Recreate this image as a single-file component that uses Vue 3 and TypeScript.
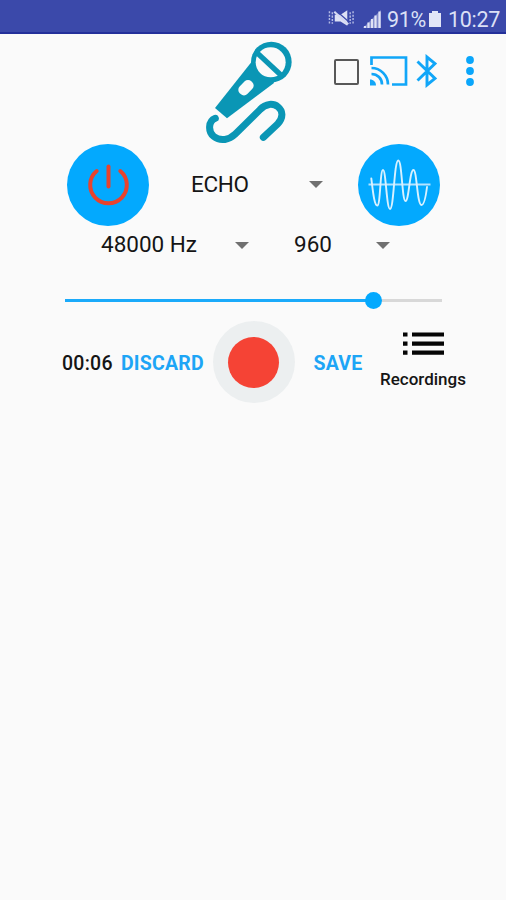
<script setup lang="ts">
import { ref } from 'vue'

const mode = ref('ECHO')
const sampleRate = ref('48000 Hz')
const bufferSize = ref('960')
const elapsed = ref('00:06')
const volume = ref(82)
</script>

<template>
  <main class="screen">
    <div class="status">
      <svg class="mute" viewBox="0 0 28 18">
        <path d="M7 5.500h6L20 1v16l-7-4.500H7z" fill="#dde1f5" />
        <path d="M9 2l15 13" stroke="#3b49aa" stroke-width="1.300" />
        <path d="M6.500 2.500L21 15.500" stroke="#d5d9f2" stroke-width="2.200" />
        <path d="M4.500 3v12M1.500 2v14M23 3v12M26 2v14" fill="none" stroke="#b4bbe5" stroke-width="1.500" stroke-dasharray="2.200 1.300" />
      </svg>
      <svg class="signal" viewBox="0 0 18 18">
        <path d="M0 18L18 0v18z" fill="#7e88cb" />
        <path d="M2 18v-2M5.500 18v-5.500M9 18V9M12.500 18V5.500M16.500 18V1.500" stroke="#e0e3f6" stroke-width="2.200" />
      </svg>
      <span class="percent">91%</span>
      <svg class="battery" viewBox="0 0 12 16"><path d="M3 0h6v2h3v14H0V2h3z" fill="#e2e5f7" /></svg>
      <span class="clock">10:27</span>
    </div>

    <header class="header">
      <svg class="mic" viewBox="0 0 330 345">
        <path d="M170 80L60 219L96 250L238 143z" fill="#0a96b5" />
        <circle cx="229" cy="81" r="61" fill="#0a96b5" />
        <circle cx="227" cy="82" r="45" fill="#fafafa" />
        <path d="M188 55L264 126" stroke="#0a96b5" stroke-width="16" />
        <rect x="-25" y="-16" width="50" height="32" rx="14" transform="translate(153 158) rotate(-46)" fill="#fafafa" />
        <path d="M61 250C39 259 39 290 56 304C77 321 103 314 121 297L195 224C230 184 287 227 247 268L205 307" fill="none" stroke="#0a96b5" stroke-width="21" stroke-linecap="round" />
      </svg>
      <div class="actions">
        <span class="checkbox"></span>
        <svg class="cast" viewBox="0 0 38 30">
          <path d="M1.500 9V1.500h34.500v27H22M1.500 12c9 0 16.500 7.500 16.500 16.500M1.500 18c6 0 10.500 4.500 10.500 10.500" fill="none" stroke="#11a6f8" stroke-width="2.700" />
          <path d="M0 23.500c3.500 0 6 2.500 6 6H0z" fill="#11a6f8" />
        </svg>
        <svg class="bluetooth" viewBox="0 0 22 34">
          <path d="M1.500 7.500L19 24.500L11 31V3l8 6.500L1.500 26.500" fill="none" stroke="#11a6f8" stroke-width="2.900" />
        </svg>
        <svg class="more" viewBox="0 0 8 30">
          <g fill="#0aa6fb"><circle cx="4" cy="4" r="3.900" /><circle cx="4" cy="15" r="3.900" /><circle cx="4" cy="26" r="3.900" /></g>
        </svg>
      </div>
    </header>

    <section class="modes">
      <button class="round">
        <svg viewBox="0 0 82 82">
          <path d="M29.700 27A18.300 18.300 0 1 0 53.300 27" fill="none" stroke="#e8432d" stroke-width="4" stroke-linecap="round" />
          <path d="M41.500 22.500v20" stroke="#e8432d" stroke-width="4" stroke-linecap="round" />
        </svg>
      </button>
      <div class="select mode"><span>{{ mode }}</span><i class="arrow"></i></div>
      <button class="round">
        <svg viewBox="0 0 82 82">
          <path d="M10.500 40.500H72.500" stroke="#b4e3ff" stroke-width="1.800" />
          <path d="M13.300 34.500C14.500 43 16 61.500 19.300 61.500C22.500 61.500 22 26 25 26C28 26 28.500 65 32 65C36 65 36 16.500 40.300 16.500C44 16.500 44 57 47.500 57C51 57 51.500 26 55.500 26C59 26 59 61 63.500 61C66 61 67.500 55 69 43" fill="none" stroke="#d8f1ff" stroke-width="1.900" stroke-linecap="round" />
        </svg>
      </button>
    </section>

    <section class="formats">
      <div class="select rate"><span>{{ sampleRate }}</span><i class="arrow"></i></div>
      <div class="select buffer"><span>{{ bufferSize }}</span><i class="arrow"></i></div>
    </section>

    <div class="slider">
      <div class="filled" :style="{ width: volume + '%' }"><i class="thumb"></i></div>
    </div>

    <section class="recorder">
      <span class="time">{{ elapsed }}</span>
      <a class="discard">DISCARD</a>
      <button class="record"><i></i></button>
      <a class="save">SAVE</a>
      <div class="recordings">
        <svg viewBox="0 0 41 24">
          <path d="M0 2.500h4.500M9 2.500h32M0 11.700h4.500M9 11.700h32M0 20.700h4.500M9 20.700h32" stroke="#050505" stroke-width="4.200" />
        </svg>
        <span>Recordings</span>
      </div>
    </section>
  </main>
</template>

<style>
body {
  margin: 0;
  background: #fafafa;
}
</style>

<style scoped>
.screen {
  width: 506px;
  height: 900px;
  overflow: hidden;
  background: #fafafa;
  color: #151515;
  font-family: Roboto, "Liberation Sans", sans-serif;
}
svg {
  display: block;
  flex: none;
}
span, a {
  white-space: nowrap;
}
button {
  border: 0;
  padding: 0;
  flex: none;
  border-radius: 50%;
}
.status {
  box-sizing: border-box;
  height: 34px;
  display: flex;
  align-items: center;
  padding: 6px 0 0 328px;
  background: #3b49aa;
  border-bottom: 2px solid #24309a;
  color: #dce0f6;
  font-size: 21.500px;
}
.mute { width: 27px; height: 18px; margin-top: -2px; }
.signal { width: 18px; height: 18px; margin-left: 8px; margin-top: -1px; }
.percent { width: 40px; margin-left: 6px; letter-spacing: -0.300px; }
.battery { width: 12px; height: 16px; margin-left: 2px; margin-top: -1px; }
.clock { margin-left: 7px; letter-spacing: -0.300px; }
.header {
  height: 110px;
  display: flex;
  align-items: flex-start;
  padding-left: 195px;
}
.mic { width: 110px; height: 115px; margin-top: 1px; }
.actions {
  display: flex;
  align-items: center;
  height: 74px;
  margin-left: 29px;
}
.checkbox {
  box-sizing: border-box;
  width: 25px;
  height: 26px;
  margin-top: 2px;
  border: 2px solid #585858;
  border-radius: 2px;
}
.cast { width: 38px; height: 30px; margin-left: 11px; }
.bluetooth { width: 22px; height: 34px; margin-left: 8px; }
.more { width: 8px; height: 30px; margin-left: 28px; }
.modes {
  display: flex;
  align-items: center;
  height: 81px;
  padding-left: 67px;
}
.round {
  width: 82px;
  height: 82px;
  background: #03a9fe;
}
.select {
  box-sizing: border-box;
  display: flex;
  align-items: center;
  justify-content: space-between;
  font-size: 22.500px;
}
.select span { padding-bottom: 2px; }
.arrow {
  border: 7px solid transparent;
  border-top-color: #707070;
  border-bottom: 0;
}
.mode { width: 132px; margin: 0 35px 0 42px; }
.mode span { letter-spacing: -0.300px; }
.formats {
  display: flex;
  height: 40px;
  padding-left: 101px;
}
.rate { width: 148px; }
.buffer { width: 96px; margin-left: 45px; }
.slider {
  width: 377px;
  height: 3px;
  margin: 34px 0 0 65px;
  background: #d8d8d8;
}
.filled {
  display: flex;
  align-items: center;
  justify-content: flex-end;
  height: 3px;
  background: #1aaafa;
}
.thumb {
  flex: none;
  width: 17px;
  height: 17px;
  margin-right: -8px;
  border-radius: 50%;
  background: #03a9fe;
}
.recorder {
  display: flex;
  align-items: center;
  height: 82px;
  margin-top: 19px;
  padding-left: 62px;
  font-size: 19.500px;
}
.time, .discard, .save { padding-top: 2px; }
.time { width: 59px; font-weight: 500; letter-spacing: 0.250px; }
.discard, .save { color: #1da5f6; font-weight: 700; letter-spacing: 0.200px; }
.discard { width: 91.500px; }
.record {
  display: flex;
  align-items: center;
  justify-content: center;
  width: 82px;
  height: 82px;
  background: #eceff0;
}
.record i {
  width: 51px;
  height: 51px;
  border-radius: 50%;
  background: #f54335;
}
.save { width: 66.500px; margin-left: 19px; }
.recordings {
  display: flex;
  flex-direction: column;
  align-items: center;
  width: 86px;
  padding-bottom: 3px;
  font-size: 17px;
  font-weight: 500;
  line-height: 20px;
}
.recordings svg { width: 41px; height: 24px; margin-bottom: 13px; }
</style>
